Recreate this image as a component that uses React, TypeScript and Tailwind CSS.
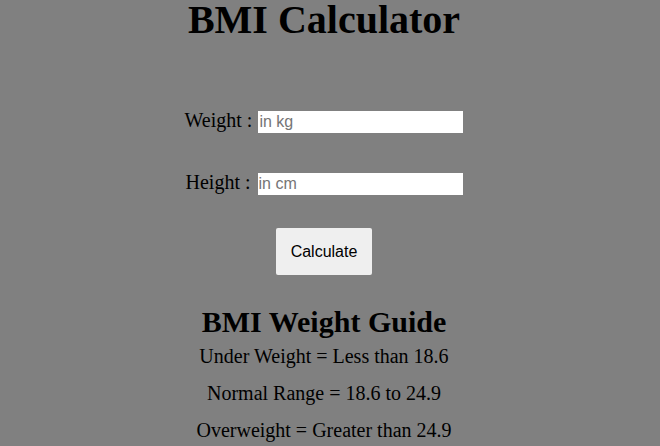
export default function App() {
  return (
    <div className="min-h-[446px] w-full bg-[#808080] font-['Liberation_Serif',serif] text-black">
      <div className="flex w-[648px] flex-col items-center">
        <h1 className="m-0 text-[40px] font-bold leading-[40px]">BMI Calculator</h1>

        <div className="mt-[65px] flex items-baseline text-[20px]">
          <label htmlFor="weight">Weight :</label>
          <input
            id="weight"
            type="text"
            placeholder="in kg"
            className="ml-[6px] h-[22px] w-[205px] bg-white px-[1px] font-['Liberation_Sans',sans-serif] text-[16px] text-black outline-none placeholder:text-[#757575]"
          />
        </div>

        <div className="mt-[32px] flex items-baseline text-[20px]">
          <label htmlFor="height">Height :</label>
          <input
            id="height"
            type="text"
            placeholder="in cm"
            className="ml-[7px] h-[22px] w-[205px] bg-white px-[1px] font-['Liberation_Sans',sans-serif] text-[16px] text-black outline-none placeholder:text-[#757575]"
          />
        </div>

        <button
          type="button"
          className="mt-[31px] h-[47px] w-[96px] rounded-[2px] bg-[#efefef] font-['Liberation_Sans',sans-serif] text-[16px] text-black"
        >
          Calculate
        </button>

        <h2 className="mt-[32px] text-[30px] font-bold leading-[30px]">BMI Weight Guide</h2>
        <div className="mt-[1px] flex flex-col items-center text-[20px] leading-[37px]">
          <p>Under Weight = Less than 18.6</p>
          <p>Normal Range = 18.6 to 24.9</p>
          <p>Overweight = Greater than 24.9</p>
        </div>
      </div>
    </div>
  );
}
